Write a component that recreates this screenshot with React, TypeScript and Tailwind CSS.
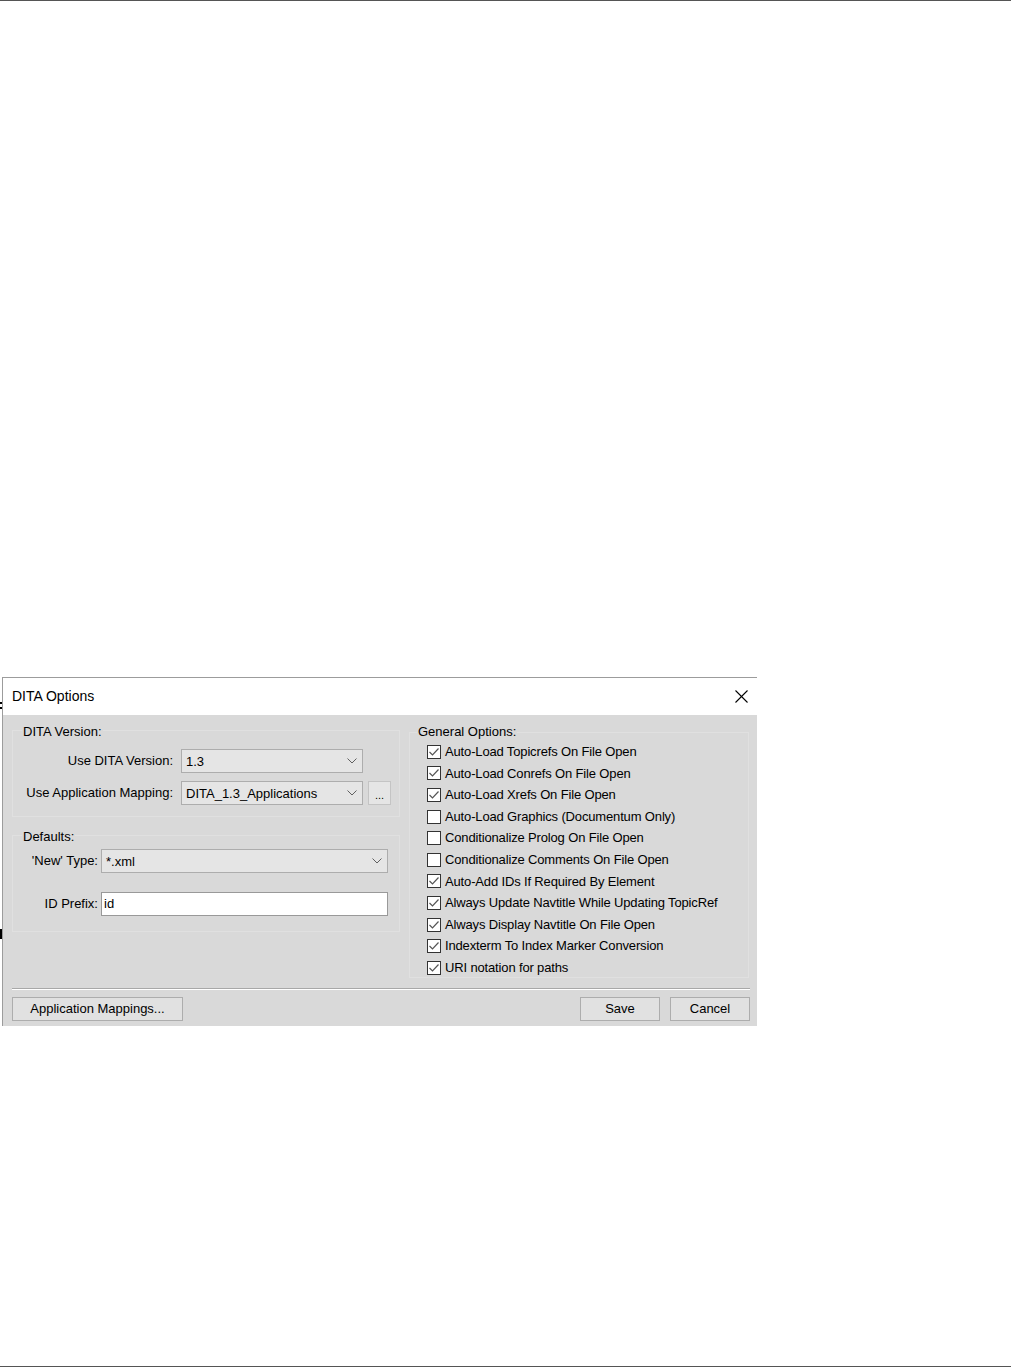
import React from "react";

const Chevron = () => (
  <svg width="10" height="6" viewBox="0 0 10 6" className="shrink-0">
    <polyline points="0.5,0.5 5,5 9.5,0.5" fill="none" stroke="#606060" strokeWidth="1" />
  </svg>
);

function Select({ value, w, h }: { value: string; w: string; h: string }) {
  return (
    <div className={`${w} ${h} flex items-center justify-between border border-[#adadad] bg-[#e5e5e5] pl-[4px] pr-[5px]`}>
      <span className="leading-none">{value}</span>
      <Chevron />
    </div>
  );
}

function Check({ label, checked }: { label: string; checked: boolean }) {
  return (
    <div className="flex h-[21.6px] items-center">
      <div className="flex h-[14px] w-[14px] items-center justify-center border border-[#333333] bg-white">
        {checked && (
          <svg width="12" height="12" viewBox="0 0 12 12">
            <polyline points="1.5,6 4.5,9 10.5,2.5" fill="none" stroke="#555555" strokeWidth="1.2" />
          </svg>
        )}
      </div>
      <span className="ml-[4px] whitespace-nowrap tracking-[-0.15px]">{label}</span>
    </div>
  );
}

function Button({ label, w }: { label: string; w: string }) {
  return (
    <div className={`${w} flex h-[24px] items-center justify-center border border-[#adadad] bg-[#e1e1e1]`}>
      {label}
    </div>
  );
}

const options: [string, boolean][] = [
  ["Auto-Load Topicrefs On File Open", true],
  ["Auto-Load Conrefs On File Open", true],
  ["Auto-Load Xrefs On File Open", true],
  ["Auto-Load Graphics (Documentum Only)", false],
  ["Conditionalize Prolog On File Open", false],
  ["Conditionalize Comments On File Open", false],
  ["Auto-Add IDs If Required By Element", true],
  ["Always Update Navtitle While Updating TopicRef", true],
  ["Always Display Navtitle On File Open", true],
  ["Indexterm To Index Marker Conversion", true],
  ["URI notation for paths", true],
];

export default function App() {
  return (
    <div className="relative flex h-[1367px] w-[1011px] flex-col bg-white font-['Liberation_Sans',Arial,sans-serif] text-[13px] text-black">
      <div className="h-px w-full bg-[#555555]" />

      {/* edge artifacts */}
      <div className="absolute left-0 top-[702px] h-[2px] w-[2px] bg-black" />
      <div className="absolute left-0 top-[707px] h-[2px] w-[2px] bg-black" />
      <div className="absolute left-0 top-[929px] h-[10px] w-[2px] bg-black" />

      <div className="ml-[2px] mt-[676px] w-[755px] border-l border-t border-[#9c9c9c]">
        {/* Title bar */}
        <div className="flex h-[37px] items-center justify-between bg-white pl-[9px] pr-[9px]">
          <span className="text-[14px]">DITA Options</span>
          <svg width="13" height="13" viewBox="0 0 13 13">
            <line x1="0.5" y1="0.5" x2="12.5" y2="12.5" stroke="#000" strokeWidth="1.1" />
            <line x1="12.5" y1="0.5" x2="0.5" y2="12.5" stroke="#000" strokeWidth="1.1" />
          </svg>
        </div>

        {/* Body */}
        <div className="flex h-[311px] flex-col bg-[#d9d9d9] pl-[9px] pr-[7px] pt-[15px]">
          <div className="flex h-[248px] gap-[9px]">
            {/* Left column */}
            <div className="flex w-[388px] flex-col">
              <div className="h-[87px] border border-[#e0e0e0]">
                <div className="-mt-[7px] ml-[9px] w-fit bg-[#d9d9d9] px-px leading-[16px]">DITA Version:</div>
                <div className="mt-[9px] flex items-center">
                  <div className="w-[161px] pr-[1px] text-right">Use DITA Version:</div>
                  <div className="ml-[7px]">
                    <Select value="1.3" w="w-[182px]" h="h-[24px]" />
                  </div>
                </div>
                <div className="mt-[8px] flex items-center">
                  <div className="w-[161px] pr-[1px] text-right">Use Application Mapping:</div>
                  <div className="ml-[7px]">
                    <Select value="DITA_1.3_Applications" w="w-[182px]" h="h-[24px]" />
                  </div>
                  <div className="ml-[5px] flex h-[24px] w-[23px] items-end justify-center border border-[#c4c4c4] bg-[#e5e5e5] pb-[3px] text-[11px] leading-none">
                    ...
                  </div>
                </div>
              </div>

              <div className="mt-[18px] h-[97px] border border-[#e0e0e0]">
                <div className="-mt-[7px] ml-[9px] w-fit bg-[#d9d9d9] px-px leading-[16px]">Defaults:</div>
                <div className="mt-[4px] flex items-center">
                  <div className="w-[86px] pr-[1px] text-right">'New' Type:</div>
                  <div className="ml-[2px]">
                    <Select value="*.xml" w="w-[287px]" h="h-[24px]" />
                  </div>
                </div>
                <div className="mt-[19px] flex items-center">
                  <div className="w-[86px] pr-[1px] text-right">ID Prefix:</div>
                  <div className="ml-[2px] flex h-[24px] w-[287px] items-center border border-[#999999] bg-white pl-[2px]">
                    id
                  </div>
                </div>
              </div>
            </div>

            {/* Right column */}
            <div className="mt-[2px] h-[246px] w-[340px] border border-[#e0e0e0]">
              <div className="-mt-[9px] ml-[7px] w-fit bg-[#d9d9d9] px-px leading-[16px]">General Options:</div>
              <div className="mt-px flex flex-col pl-[17px]">
                {options.map(([label, checked]) => (
                  <Check key={label} label={label} checked={checked} />
                ))}
              </div>
            </div>
          </div>

          {/* separator */}
          <div className="mt-[10px] h-px w-[738px] bg-[#a8a8a8]" />
          <div className="h-px w-[738px] bg-white" />

          {/* buttons */}
          <div className="mt-[7px] flex w-[738px] items-center">
            <Button label="Application Mappings..." w="w-[171px]" />
            <div className="flex-1" />
            <Button label="Save" w="w-[80px]" />
            <div className="ml-[10px]">
              <Button label="Cancel" w="w-[80px]" />
            </div>
          </div>
        </div>
      </div>

      <div className="flex-1" />
      <div className="h-px w-full bg-[#555555]" />
    </div>
  );
}
